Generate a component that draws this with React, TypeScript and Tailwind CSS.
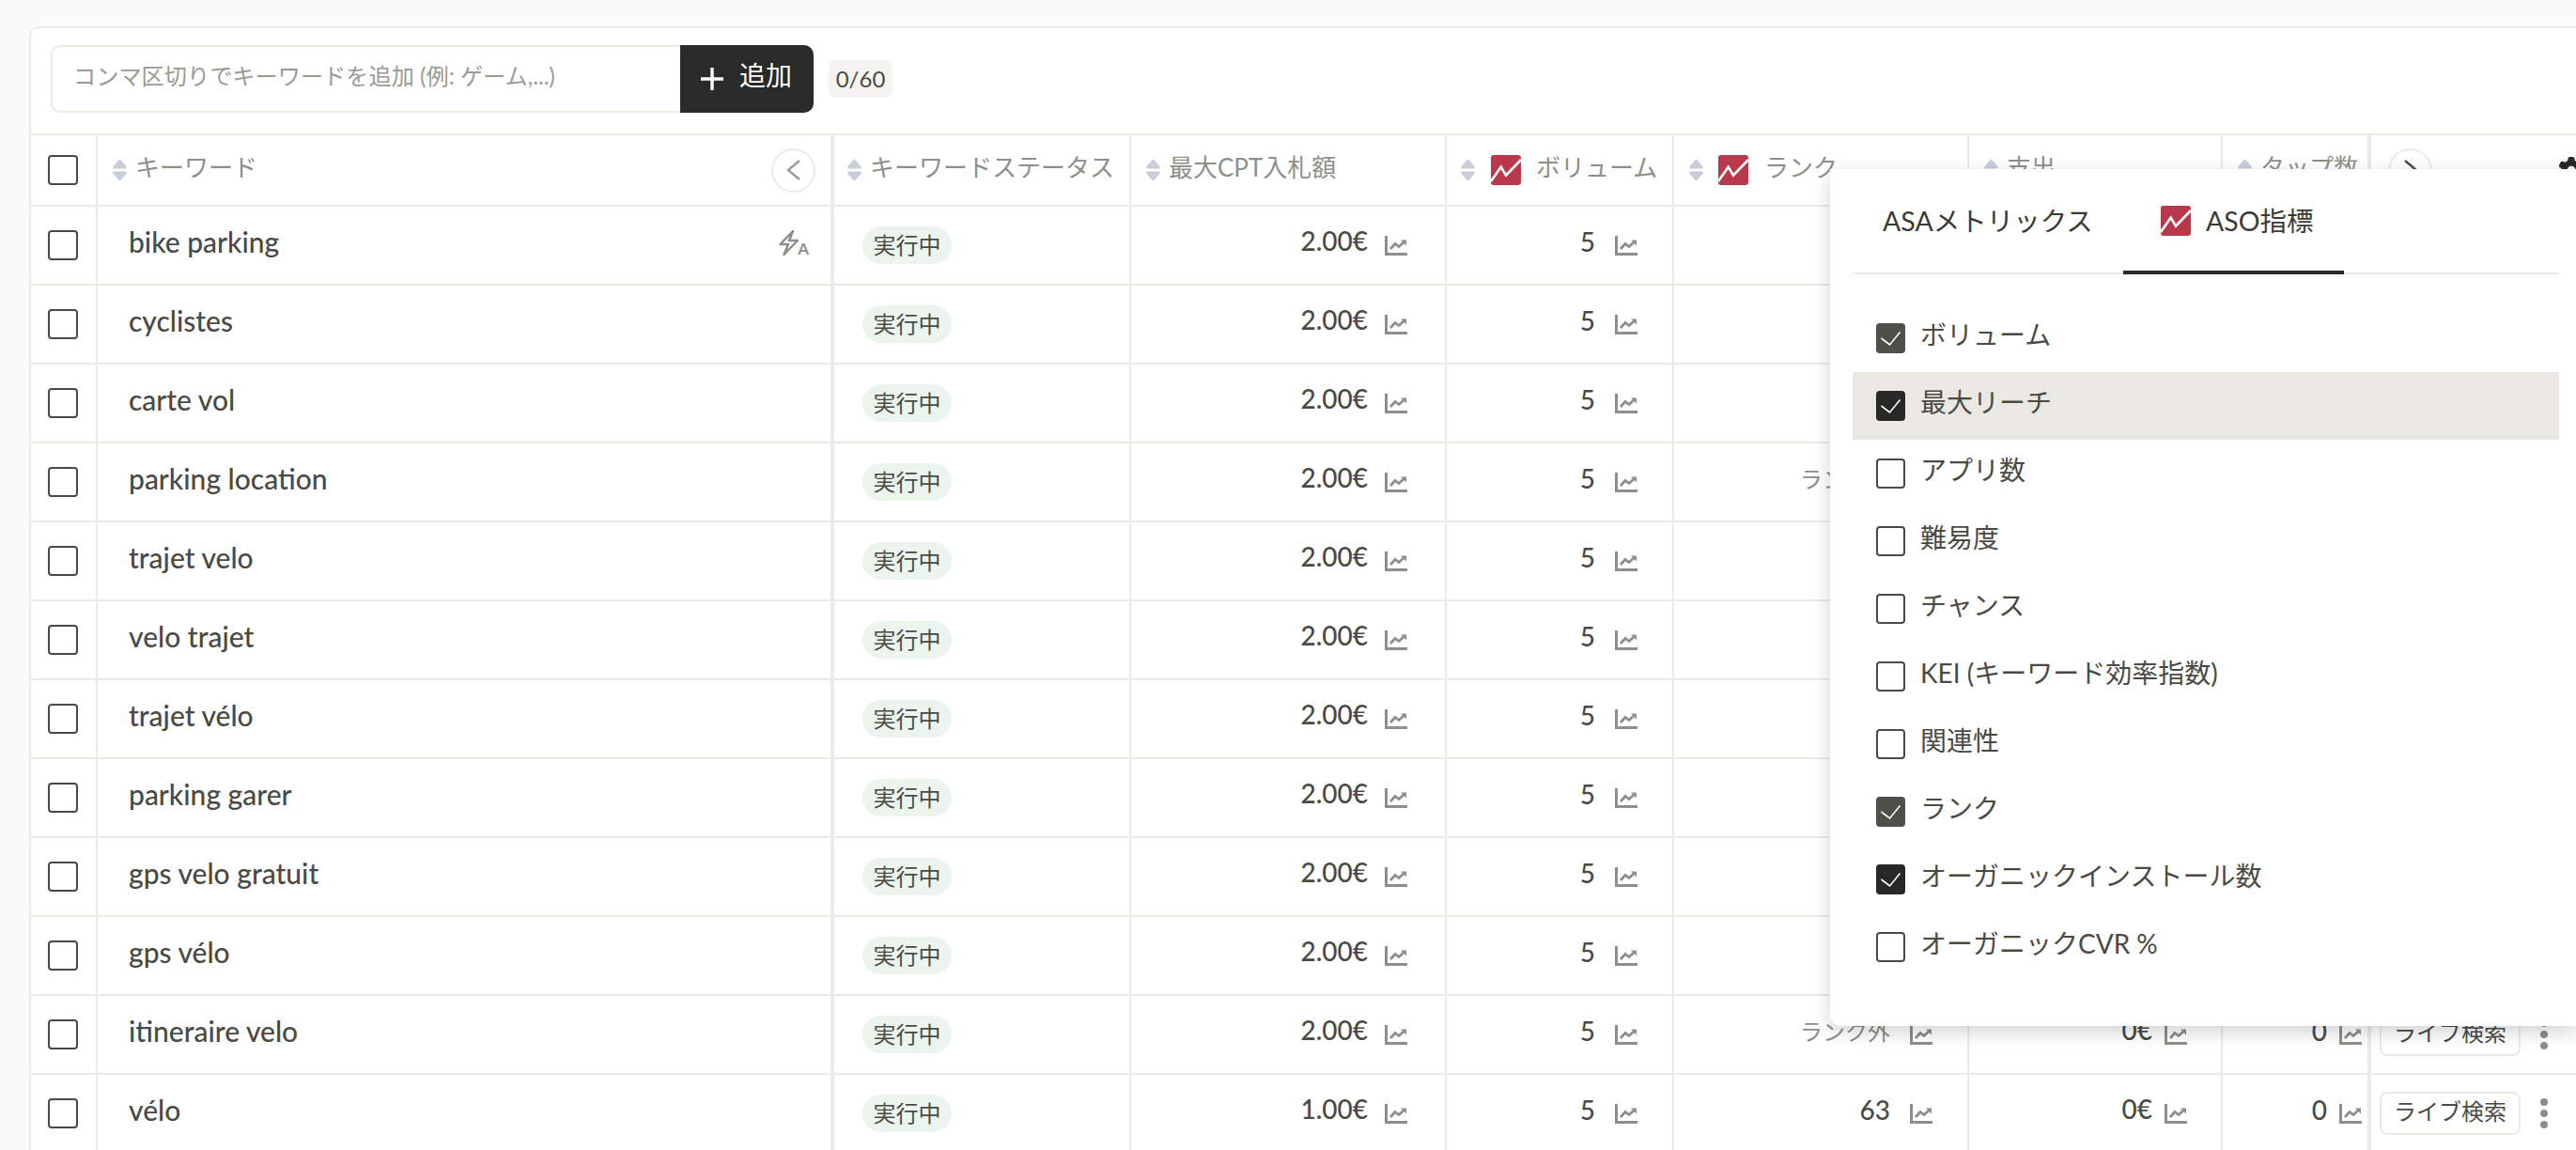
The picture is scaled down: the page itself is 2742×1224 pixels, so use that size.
import React from "react";
import { FaGear } from "react-icons/fa6";

const keywords = [
  { name: "bike parking", bid: "2.00€", rank: "63", translate: true },
  { name: "cyclistes", bid: "2.00€", rank: "63" },
  { name: "carte vol", bid: "2.00€", rank: "63" },
  { name: "parking location", bid: "2.00€", rank: "ランク外" },
  { name: "trajet velo", bid: "2.00€", rank: "63" },
  { name: "velo trajet", bid: "2.00€", rank: "63" },
  { name: "trajet vélo", bid: "2.00€", rank: "63" },
  { name: "parking garer", bid: "2.00€", rank: "63" },
  { name: "gps velo gratuit", bid: "2.00€", rank: "63" },
  { name: "gps vélo", bid: "2.00€", rank: "63" },
  { name: "itineraire velo", bid: "2.00€", rank: "ランク外" },
  { name: "vélo", bid: "1.00€", rank: "63" },
];

const metrics = [
  { label: "ボリューム", state: "muted" },
  { label: "最大リーチ", state: "checked", active: true },
  { label: "アプリ数", state: "off" },
  { label: "難易度", state: "off" },
  { label: "チャンス", state: "off" },
  { label: "KEI (キーワード効率指数)", state: "off" },
  { label: "関連性", state: "off" },
  { label: "ランク", state: "muted" },
  { label: "オーガニックインストール数", state: "checked" },
  { label: "オーガニックCVR %", state: "off" },
];

const SortIcon = () => (
  <svg width="15" height="22" viewBox="0 0 15 22" fill="#c8ccdb" className="shrink-0">
    <path d="M6 .8a2 2 0 0 1 3 0l5.4 6.2c.9 1 .3 2.6-1 2.6H1.6C.3 9.6-.3 8 .6 7z" />
    <path d="M6 21.2a2 2 0 0 0 3 0l5.4-6.2c.9-1 .3-2.6-1-2.6H1.6C.3 12.4-.3 14 .6 15z" />
  </svg>
);

const AsoLogo = () => (
  <svg width="32" height="32" viewBox="0 0 32 32" className="shrink-0">
    <rect width="32" height="32" rx="3" fill="#b9394b" />
    <path d="M0 28 L10.7 12.7 L16 21.7 L32 5" fill="none" stroke="#fff" strokeWidth="2.6" />
  </svg>
);

const ChartIcon = () => (
  <svg width="24" height="21" viewBox="0 0 24 21" fill="none" stroke="#8f8e88" className="shrink-0">
    <path d="M1.5 0V19.5H24" strokeWidth="3" />
    <path d="M6 14 11 8.5 15 11.5 20 7" strokeWidth="2.8" />
    <path d="M17 4.5H23V10.5z" fill="#8f8e88" stroke="none" />
  </svg>
);

// bolt is drawn, the small A stays real text beside it
const BoltIcon = () => (
  <span className="flex items-end">
    <svg width="21" height="29" viewBox="0 0 21 29" className="shrink-0">
      <path
        d="M15 2 1.5 16H10L5.5 27 20 12h-9z"
        fill="none"
        stroke="#8f8e88"
        strokeWidth="2.4"
        strokeLinejoin="round"
      />
    </svg>
    <span className="text-[17px] leading-[17px] font-bold text-[#8f8e88] -ml-[1px]">A</span>
  </span>
);

const Check = () => (
  <svg width="32" height="32" viewBox="0 0 32 32" fill="none">
    <path d="M5.5 16 14.5 23 25.5 9.5" stroke="#fff" strokeWidth="1.6" />
  </svg>
);

const RowBox = () => (
  <span className="w-[32px] h-[32px] rounded-[4px] border-2 border-[#4a4a45] bg-white" />
);

const CircleButton = ({ right }: { right?: boolean }) => (
  <span className="w-[47px] h-[47px] rounded-full border-2 border-[#ebebe6] flex items-center justify-center shrink-0 bg-white">
    <svg width="16" height="24" viewBox="0 0 16 24" fill="none" stroke={right ? "#4a4a45" : "#9c9b95"} strokeWidth="2.4">
      <path d={right ? "M2 2 14 12 2 22" : "M14 2 2 12 14 22"} />
    </svg>
  </span>
);

const HeaderLabel = ({ children }: { children: React.ReactNode }) => (
  <span className="text-[26px] text-[#8f8e88] whitespace-nowrap pb-[6px]">{children}</span>
);

const Value = ({ children, small, pb8 }: { children: React.ReactNode; small?: boolean; pb8?: boolean }) => {
  if (small) return <span className="text-[24px] text-[#8f8e88] pb-[6px] whitespace-nowrap">{children}</span>;
  return (
    <span className={pb8 ? "text-[28px] font-medium text-[#4a4a45] pb-[8px] whitespace-nowrap" : "text-[28px] font-medium text-[#4a4a45] pb-[10px] whitespace-nowrap"}>
      {children}
    </span>
  );
};

export default function App() {
  return (
    <div className="relative w-[2742px] h-[1224px] overflow-hidden bg-[#fafafa] pl-[31px] pt-[28px] font-[Lato,'Noto_Sans_CJK_JP',sans-serif] text-[#4a4a45]">
      <div className="w-[2760px] h-[1300px] bg-white border-l-2 border-t-2 border-[#ebebe6] rounded-tl-[10px]">
        {/* toolbar */}
        <div className="h-[114px] border-b-2 border-[#ebebe6] pl-[21px] pt-[18px] flex items-start">
          <div className="w-[670px] h-[72px] border-2 border-r-0 border-[#ebebe6] rounded-l-[10px] flex items-center pl-[22px] pb-[6px] text-[24.2px] text-[#9b9a94] whitespace-nowrap">
            コンマ区切りでキーワードを追加 (例: ゲーム,...)
          </div>
          <button className="w-[142px] h-[72px] bg-[#2a2a28] rounded-r-[10px] flex items-center pl-[22px] text-white text-[28px]">
            <svg width="24" height="24" viewBox="0 0 24 24" stroke="#fff" strokeWidth="3.4" className="shrink-0">
              <path d="M12 0V24M0 12H24" />
            </svg>
            <span className="ml-[17px] pb-[9px]">追加</span>
          </button>
          <span className="ml-[16px] mt-[16px] w-[68px] h-[40px] rounded-[8px] bg-[#f5f4f0] flex items-center justify-center text-[24px] text-[#4a4a45]">
            0/60
          </span>
        </div>

        {/* header */}
        <div className="flex h-[76px] border-b-2 border-[#ebebe6]">
          <div className="w-[71px] border-r-2 border-[#ebebe6] flex items-center pl-[18px]">
            <RowBox />
          </div>
          <div className="w-[784px] border-r-4 border-[#ebebe6] flex items-center pl-[16px] pr-[16px] gap-[9px]">
            <SortIcon />
            <HeaderLabel>キーワード</HeaderLabel>
            <span className="ml-auto">
              <CircleButton />
            </span>
          </div>
          <div className="w-[316px] border-r-2 border-[#ebebe6] flex items-center pl-[14px] gap-[9px]">
            <SortIcon />
            <HeaderLabel>キーワードステータス</HeaderLabel>
          </div>
          <div className="w-[336px] border-r-2 border-[#ebebe6] flex items-center pl-[16px] gap-[9px]">
            <SortIcon />
            <HeaderLabel>最大CPT入札額</HeaderLabel>
          </div>
          <div className="w-[242px] border-r-2 border-[#ebebe6] flex items-center pl-[15px]">
            <SortIcon />
            <span className="ml-[17px] mr-[16px]">
              <AsoLogo />
            </span>
            <HeaderLabel>ボリューム</HeaderLabel>
          </div>
          <div className="w-[314px] border-r-2 border-[#ebebe6] flex items-center pl-[16px]">
            <SortIcon />
            <span className="ml-[16px] mr-[17px]">
              <AsoLogo />
            </span>
            <HeaderLabel>ランク</HeaderLabel>
          </div>
          <div className="w-[270px] border-r-2 border-[#ebebe6] flex items-center pl-[16px] gap-[9px]">
            <SortIcon />
            <HeaderLabel>支出</HeaderLabel>
          </div>
          <div className="w-[158px] border-r-4 border-[#ebebe6] flex items-center pl-[16px] gap-[9px]">
            <SortIcon />
            <HeaderLabel>タップ数</HeaderLabel>
          </div>
          <div className="flex items-center pl-[18px]">
            <CircleButton right />
            <FaGear className="ml-[134px] w-[28px] h-[28px] text-[#2a2a28] shrink-0" />
          </div>
        </div>

        {/* rows */}
        {keywords.map((k) => (
          <div key={k.name} className="flex h-[84px] border-b-2 border-[#ebebe6]">
            <div className="w-[71px] border-r-2 border-[#ebebe6] flex items-center pl-[18px]">
              <RowBox />
            </div>
            <div className="w-[784px] border-r-4 border-[#ebebe6] flex items-center justify-between pl-[33px] pr-[23px]">
              <span className="text-[30px] font-medium text-[#4a4a45] pb-[7px] whitespace-nowrap">{k.name}</span>
              {k.translate && (
                <span className="pb-[6px]">
                  <BoltIcon />
                </span>
              )}
            </div>
            <div className="w-[316px] border-r-2 border-[#ebebe6] flex items-center pl-[30px]">
              <span className="w-[95px] h-[40px] rounded-full bg-[#ebf5ed] flex items-center justify-center text-[24px] text-[#4a4a45]">
                実行中
              </span>
            </div>
            <div className="w-[336px] border-r-2 border-[#ebebe6] flex items-center justify-end pr-[40px] gap-[18px]">
              <Value>{k.bid}</Value>
              <ChartIcon />
            </div>
            <div className="w-[242px] border-r-2 border-[#ebebe6] flex items-center justify-end pr-[37px] gap-[21px]">
              <Value pb8>5</Value>
              <ChartIcon />
            </div>
            <div className="w-[314px] border-r-2 border-[#ebebe6] flex items-center justify-end pr-[37px] gap-[21px]">
              <Value pb8 small={k.rank !== "63"}>{k.rank}</Value>
              <ChartIcon />
            </div>
            <div className="w-[270px] border-r-2 border-[#ebebe6] flex items-center justify-end pr-[36px] gap-[13px]">
              <Value>0€</Value>
              <ChartIcon />
            </div>
            <div className="w-[158px] border-r-4 border-[#ebebe6] flex items-center justify-end pr-[6px] gap-[13px]">
              <Value pb8>0</Value>
              <ChartIcon />
            </div>
            <div className="flex items-center pl-[9px]">
              <button className="w-[150px] h-[46px] rounded-[8px] border-2 border-[#ebebe6] flex items-center justify-center pb-[4px] text-[24px] text-[#4a4a45] whitespace-nowrap">
                ライブ検索
              </button>
              <span className="ml-[21px] flex flex-col gap-[4px]">
                <i className="block w-[8px] h-[8px] rounded-full bg-[#8f8e88]" />
                <i className="block w-[8px] h-[8px] rounded-full bg-[#8f8e88]" />
                <i className="block w-[8px] h-[8px] rounded-full bg-[#8f8e88]" />
              </span>
            </div>
          </div>
        ))}
      </div>

      {/* column picker */}
      <div className="absolute left-[1948px] top-[180px] w-[794px] h-[912px] bg-white rounded-bl-[12px] shadow-[0_6px_20px_rgba(0,0,0,0.18)] pl-[24px] pr-[18px]">
        <div className="h-[112px] border-b-2 border-[#ebebe6] flex text-[28.5px] text-[#3a3a36]">
          <div className="w-[288px] pl-[32px] flex items-center whitespace-nowrap">ASAメトリックス</div>
          <div className="relative w-[235px] pl-[40px] flex items-center gap-[16px] whitespace-nowrap">
            <AsoLogo />
            ASO指標
            <span className="absolute left-0 right-0 bottom-[-2px] h-[4px] bg-[#2a2a28]" />
          </div>
        </div>
        <div className="mt-[32px]">
          {metrics.map((m) => (
            <div
              key={m.label}
              className={m.active ? "h-[72px] bg-[#e9e8e3] flex items-center pl-[25px] gap-[16px]" : "h-[72px] flex items-center pl-[25px] gap-[16px]"}
            >
              {m.state === "off" ? (
                <span className="w-[31px] h-[32px] rounded-[4px] border-2 border-[#4a4a45] bg-white shrink-0" />
              ) : (
                <span className={m.state === "checked" ? "w-[31px] h-[32px] rounded-[4px] bg-[#282826] shrink-0" : "w-[31px] h-[32px] rounded-[4px] bg-[#4f4f4a] shrink-0"}>
                  <Check />
                </span>
              )}
              <span className="text-[28px] text-[#4a4a45] pb-[8px] whitespace-nowrap">{m.label}</span>
            </div>
          ))}
        </div>
      </div>
    </div>
  );
}
